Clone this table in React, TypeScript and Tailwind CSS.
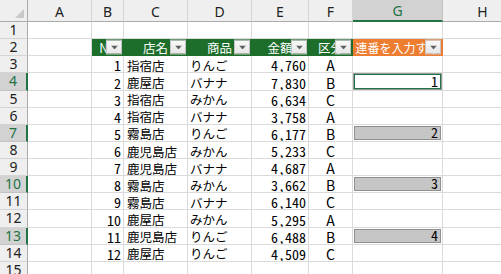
import React from "react";

const JP = '"Noto Sans CJK JP", "Noto Sans", sans-serif';
const HDR = '"Noto Sans", "Liberation Sans", sans-serif';

type Row = [number, string, string, string, string];
const data: Row[] = [
  [1, "指宿店", "りんご", "4,760", "A"],
  [2, "鹿屋店", "バナナ", "7,830", "B"],
  [3, "指宿店", "みかん", "6,634", "C"],
  [4, "指宿店", "バナナ", "3,758", "A"],
  [5, "霧島店", "りんご", "6,177", "B"],
  [6, "鹿児島店", "みかん", "5,233", "C"],
  [7, "鹿児島店", "バナナ", "4,687", "A"],
  [8, "霧島店", "みかん", "3,662", "B"],
  [9, "霧島店", "バナナ", "6,140", "C"],
  [10, "鹿屋店", "みかん", "5,295", "A"],
  [11, "鹿児島店", "りんご", "6,488", "B"],
  [12, "鹿屋店", "りんご", "4,509", "C"],
];

const gVals: Record<number, number> = { 4: 1, 7: 2, 10: 3, 13: 4 };
const selRows = [4, 7, 10, 13];
const cols = ["A", "B", "C", "D", "E", "F", "G", "H"];

function DropBtn() {
  return (
    <div className="absolute right-px top-1/2 -translate-y-1/2 w-[16px] h-[15px] border border-[#c4c4c4] bg-gradient-to-b from-[#fafafa] to-[#e6e6e6] flex items-center justify-center">
      <svg width="7" height="4" viewBox="0 0 7 4">
        <path d="M0 0 L7 0 L3.5 4 Z" fill="#606060" />
      </svg>
    </div>
  );
}

const cell = "relative border-r border-b border-[#dadada] overflow-hidden";
const num = { fontFamily: JP, fontFeatureSettings: '"hwid"' } as React.CSSProperties;
const letter = { fontFamily: JP } as React.CSSProperties;

export default function App() {
  const cells: React.ReactNode[] = [];

  cells.push(
    <div key="corner" className="relative bg-[#efefef] border-r border-b border-[#ababab]">
      <svg className="absolute right-[3px] bottom-[3px]" width="9" height="9" viewBox="0 0 9 9">
        <path d="M9 0 L9 9 L0 9 Z" fill="#c9c9c9" />
      </svg>
    </div>
  );
  cols.forEach((c) => {
    const sel = c === "G";
    cells.push(
      <div
        key={"h" + c}
        className={
          "flex items-center justify-center pt-[2px] text-[14px] leading-none border-r " +
          (sel
            ? "bg-[#d2d2d2] text-[#217346] border-[#c3c3c3] border-b-2 border-b-[#217346]"
            : "bg-[#efefef] text-[#222] border-[#d4d4d4] border-b border-b-[#ababab]")
        }
        style={{ fontFamily: HDR }}
      >
        {c}
      </div>
    );
  });

  for (let r = 1; r <= 15; r++) {
    const sel = selRows.includes(r);
    cells.push(
      <div
        key={"r" + r}
        className={
          "flex items-center justify-center text-[14px] leading-none border-b " +
          (sel
            ? "bg-[#d2d2d2] text-[#217346] border-[#c3c3c3] border-r-2 border-r-[#217346]"
            : "bg-[#efefef] text-[#222] border-[#d4d4d4] border-r border-r-[#ababab]")
        }
        style={{ fontFamily: HDR }}
      >
        {r}
      </div>
    );

    if (r === 2) {
      cells.push(<div key="A2" className={cell} />);
      const heads = ["No", "店名", "商品", "金額", "区分"];
      heads.forEach((h, i) => {
        cells.push(
          <div
            key={"th" + i}
            className="relative bg-[#1e6e2b] border-b border-r border-[#1e6e2b] flex items-end justify-center text-white text-[12.5px] leading-none whitespace-nowrap overflow-hidden pb-[1px]"
            style={{ fontFamily: JP }}
          >
            {h}
            <DropBtn />
          </div>
        );
      });
      cells.push(
        <div
          key="thG"
          className="relative bg-[#ed7d31] border-b border-r border-[#ed7d31] flex items-end justify-center text-white text-[12px] leading-none whitespace-nowrap overflow-hidden pb-[1px]"
          style={{ fontFamily: JP }}
        >
          連番を入力する
          <DropBtn />
        </div>
      );
      cells.push(<div key="H2" className={cell} />);
      continue;
    }

    const d = r >= 3 && r <= 14 ? data[r - 3] : null;
    cells.push(<div key={"A" + r} className={cell} />);
    cells.push(
      <div key={"B" + r} className={cell + " flex items-end justify-end pr-[2px] text-[14px] leading-none text-black"} style={num}>
        {d ? d[0] : ""}
      </div>
    );
    cells.push(
      <div key={"C" + r} className={cell + " flex items-end pl-[3px] text-[12.5px] leading-none text-black whitespace-nowrap"} style={{ fontFamily: JP }}>
        {d ? d[1] : ""}
      </div>
    );
    cells.push(
      <div key={"D" + r} className={cell + " flex items-end pl-[2px] text-[12.5px] leading-none text-black whitespace-nowrap"} style={{ fontFamily: JP }}>
        {d ? d[2] : ""}
      </div>
    );
    cells.push(
      <div key={"E" + r} className={cell + " flex items-end justify-end pr-[2px] text-[14px] leading-none text-black"} style={num}>
        {d ? d[3] : ""}
      </div>
    );
    cells.push(
      <div key={"F" + r} className={cell + " flex items-end justify-center text-[14px] leading-none text-black"} style={letter}>
        {d ? d[4] : ""}
      </div>
    );
    const gv = gVals[r];
    cells.push(
      <div key={"G" + r} className={cell + " flex"}>
        {gv !== undefined && (
          <div
            className={
              "m-px flex-1 flex items-end justify-end pr-[2px] text-[14px] leading-none text-black border " +
              (r === 4 ? "bg-white border-[#217346] outline outline-1 outline-[#9a9a9a]" : "bg-[#c6c6c6] border-[#8f8f8f]")
            }
            style={num}
          >
            {gv}
          </div>
        )}
      </div>
    );
    cells.push(<div key={"H" + r} className={cell} />);
  }

  return (
    <div className="w-[501px] h-[274px] overflow-hidden bg-white">
      <div className="grid grid-cols-[28px_64px_32px_64px_64px_57px_44px_90px_80px] grid-rows-[22px_repeat(15,17.13px)]">
        {cells}
      </div>
    </div>
  );
}
